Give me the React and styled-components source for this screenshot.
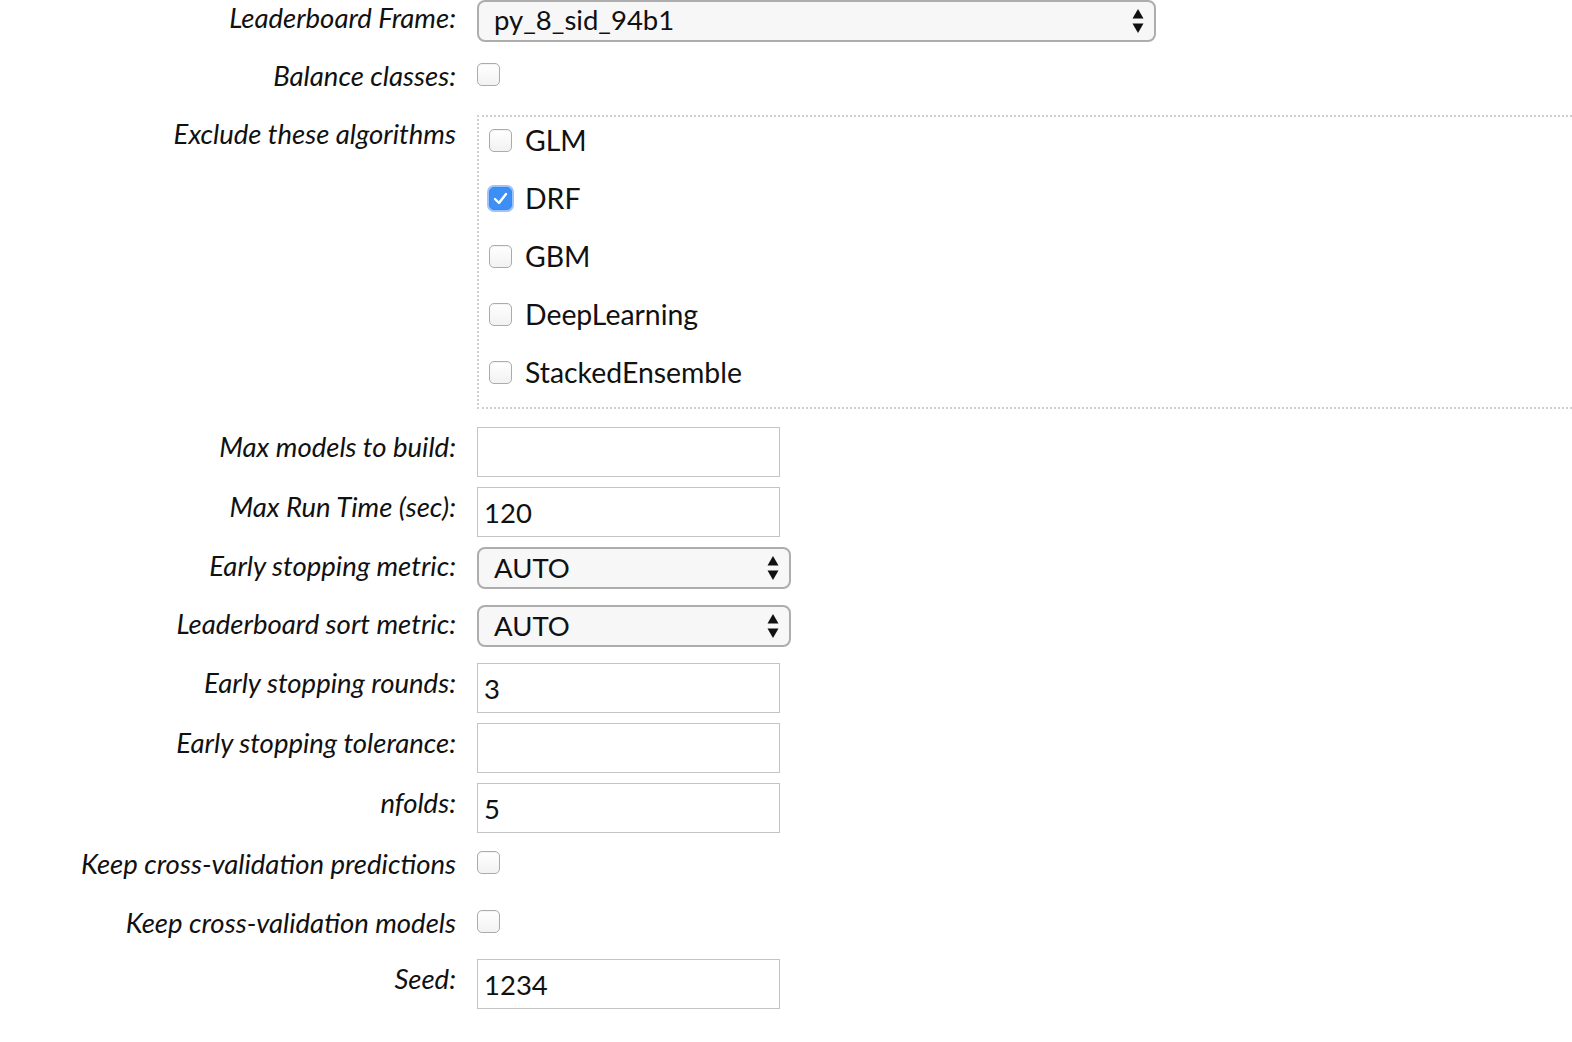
import React from 'react';
import styled, { createGlobalStyle } from 'styled-components';

const GlobalStyle = createGlobalStyle`
    html, body {
        margin: 0;
        padding: 0;
        background: #fff;
        overflow: hidden;
    }
    body {
        font-family: Lato, "Open Sans", sans-serif;
        color: #111;
    }
`;

const Form = styled.div`
    display: flex;
    flex-direction: column;
    width: 1572px;
`;

const Row = styled.div`
    display: grid;
    grid-template-columns: 456px 1fr;
    column-gap: 21px;
    align-items: ${p => (p.top ? 'start' : 'center')};
    margin-top: ${p => p.mt || 0}px;
`;

const Label = styled.div`
    text-align: right;
    font-style: italic;
    font-size: 27.5px;
    line-height: 32px;
    white-space: nowrap;
    position: relative;
    top: ${p => p.shift || 0}px;
`;

const SelectBox = styled.div`
    box-sizing: border-box;
    width: ${p => p.w}px;
    height: 42px;
    border: 2px solid #adadad;
    border-radius: 8px;
    background: #f7f7f7;
    display: flex;
    align-items: center;
    justify-content: space-between;
    padding: 0 10px 0 15px;
    font-size: 27.5px;
`;

const SelectText = styled.span`
    position: relative;
    top: ${p => p.shift || 0}px;
`;

const TextBox = styled.div`
    box-sizing: border-box;
    width: 303px;
    height: 50px;
    border: 1px solid #c4c4c4;
    background: #fff;
    display: flex;
    align-items: center;
    padding: 0 6px;
    font-size: 27.5px;
`;

const Check = styled.span`
    box-sizing: border-box;
    display: inline-flex;
    align-items: center;
    justify-content: center;
    width: 23px;
    height: 23px;
    border-radius: 5px;
    border: 1px solid ${p => (p.on ? '#3a87f2' : '#ababab')};
    background: ${p => (p.on ? '#3d8ff5' : 'linear-gradient(#fff, #f2f2f2)')};
    box-shadow: ${p => (p.on ? '0 0 0 2px #9cc4fa' : 'inset 0 1px 1px rgba(0,0,0,0.05)')};
    flex: none;
`;

const AlgoBox = styled.div`
    border: 2px dotted #cfcfcf;
    border-right: none;
    height: 294px;
    box-sizing: border-box;
    padding: 4px 0 0 10px;
    display: flex;
    flex-direction: column;
    gap: 20px;
`;

const Algo = styled.div`
    display: flex;
    align-items: center;
    gap: 13px;
    height: 38px;
    font-size: 28.4px;
`;

const Arrows = () => (
    <svg width="12" height="26" viewBox="0 0 12 26">
        <path d="M6 1 L11.5 10.5 L0.5 10.5 Z" fill="#111" />
        <path d="M6 25 L11.5 15.5 L0.5 15.5 Z" fill="#111" />
    </svg>
);

const Tick = () => (
    <svg width="15" height="13" viewBox="0 0 15 13">
        <path d="M2 7 L6 11 L13 2" stroke="#fff" strokeWidth="2.4" fill="none" strokeLinecap="round" strokeLinejoin="round" />
    </svg>
);

const Select = ({ w, value, shift }) => (
    <SelectBox w={w}>
        <SelectText shift={shift}>{value}</SelectText>
        <Arrows />
    </SelectBox>
);

const algorithms = [
    { name: 'GLM', on: false },
    { name: 'DRF', on: true },
    { name: 'GBM', on: false },
    { name: 'DeepLearning', on: false },
    { name: 'StackedEnsemble', on: false },
];

export default function App() {
    return <>
        <GlobalStyle />
        <Form>
            <Row>
                <Label shift={-3}>Leaderboard Frame:</Label>
                <div><Select w={679} value="py_8_sid_94b1" shift={-2} /></div>
            </Row>
            <Row mt={18}>
                <Label>Balance classes:</Label>
                <div><Check /></div>
            </Row>
            <Row mt={23} top>
                <Label shift={3}>Exclude these algorithms</Label>
                <AlgoBox>
                    {algorithms.map(a => (
                        <Algo key={a.name}>
                            <Check on={a.on}>{a.on ? <Tick /> : null}</Check>
                            <span>{a.name}</span>
                        </Algo>
                    ))}
                </AlgoBox>
            </Row>
            <Row mt={18}>
                <Label shift={-5}>Max models to build:</Label>
                <div><TextBox /></div>
            </Row>
            <Row mt={10}>
                <Label shift={-5}>Max Run Time (sec):</Label>
                <div><TextBox>120</TextBox></div>
            </Row>
            <Row mt={10}>
                <Label shift={-2}>Early stopping metric:</Label>
                <div><Select w={314} value="AUTO" shift={-1} /></div>
            </Row>
            <Row mt={16}>
                <Label shift={-2}>Leaderboard sort metric:</Label>
                <div><Select w={314} value="AUTO" shift={-1} /></div>
            </Row>
            <Row mt={16}>
                <Label shift={-5}>Early stopping rounds:</Label>
                <div><TextBox>3</TextBox></div>
            </Row>
            <Row mt={10}>
                <Label shift={-5}>Early stopping tolerance:</Label>
                <div><TextBox /></div>
            </Row>
            <Row mt={10}>
                <Label shift={-5}>nfolds:</Label>
                <div><TextBox>5</TextBox></div>
            </Row>
            <Row mt={15}>
                <Label>Keep cross-validation predictions</Label>
                <div><Check /></div>
            </Row>
            <Row mt={27}>
                <Label>Keep cross-validation models</Label>
                <div><Check /></div>
            </Row>
            <Row mt={20}>
                <Label shift={-5}>Seed:</Label>
                <div><TextBox>1234</TextBox></div>
            </Row>
        </Form>
    </>;
}
